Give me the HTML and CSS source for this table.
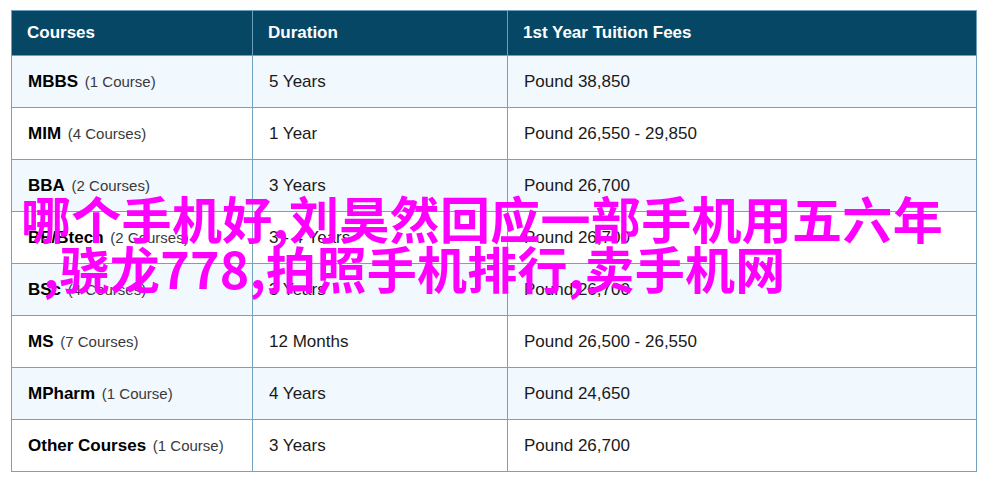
FILE: index.html
```html
<!DOCTYPE html>
<html lang="en">
<head>
<meta charset="utf-8">
<title>Courses</title>
<link rel="stylesheet" href="styles.css">
</head>
<body>
<div class="page">
  <table class="fees">
    <colgroup>
      <col class="c1"><col class="c2"><col class="c3">
    </colgroup>
    <thead>
      <tr><th>Courses</th><th>Duration</th><th>1st Year Tuition Fees</th></tr>
    </thead>
    <tbody>
      <tr><td><b>MBBS</b> <span class="n">(1 Course)</span></td><td>5 Years</td><td>Pound 38,850</td></tr>
      <tr><td><b>MIM</b> <span class="n">(4 Courses)</span></td><td>1 Year</td><td>Pound 26,550 - 29,850</td></tr>
      <tr><td><b>BBA</b> <span class="n">(2 Courses)</span></td><td>3 Years</td><td>Pound 26,700</td></tr>
      <tr><td><b>BE/Btech</b> <span class="n">(2 Courses)</span></td><td>3 - 4 Years</td><td>Pound 26,700</td></tr>
      <tr><td><b>BSc</b> <span class="n">(4 Courses)</span></td><td>3 Years</td><td>Pound 26,700</td></tr>
      <tr><td><b>MS</b> <span class="n">(7 Courses)</span></td><td>12 Months</td><td>Pound 26,500 - 26,550</td></tr>
      <tr><td><b>MPharm</b> <span class="n">(1 Course)</span></td><td>4 Years</td><td>Pound 24,650</td></tr>
      <tr><td><b>Other Courses</b> <span class="n">(1 Course)</span></td><td>3 Years</td><td>Pound 26,700</td></tr>
    </tbody>
  </table>
  <div class="overlay">
    <div class="l1">哪个手机好,刘昊然回应一部手机用五六年</div>
    <div class="l2">,骁龙778,拍照手机排行,卖手机网</div>
  </div>
</div>
</body>
</html>
```
FILE: styles.css
```css
html, body {
  margin: 0;
  padding: 0;
  background: #ffffff;
}
body {
  font-family: "Liberation Sans", Arial, sans-serif;
  color: #1a1a1a;
}
.page {
  position: relative;
  padding: 10px 0 0 11px;
}
.fees {
  border-collapse: collapse;
  width: 965px;
  table-layout: fixed;
}
.c1 { width: 241px; }
.c2 { width: 255px; }
.c3 { width: 469px; }
.fees th {
  background: #074766;
  color: #ffffff;
  font-size: 17px;
  font-weight: bold;
  text-align: left;
  height: 45px;
  padding: 0 15px;
  border: 1px solid #6e9fbd;
  box-sizing: border-box;
}
.fees td {
  height: 52px;
  box-sizing: border-box;
  padding: 0 16px;
  font-size: 17px;
  border: 1px solid #74a3c1;
  vertical-align: middle;
}
.fees tbody tr:nth-child(odd) td { background: #f1f8fe; }
.fees tbody tr:nth-child(even) td { background: #ffffff; }
.fees b {
  font-weight: bold;
  color: #000;
}
.n {
  font-size: 15px;
  color: #3a3a3a;
  margin-left: 2px;
}
.overlay {
  position: absolute;
  left: 21px;
  top: 192px;
  color: #ff00ff;
  font-family: "Noto Sans CJK SC", "Noto Sans", sans-serif;
  font-weight: 700;
  font-size: 50px;
  line-height: 50px;
  letter-spacing: 0.3px;
  white-space: nowrap;
}
.l2 { padding-left: 22px; }
```
